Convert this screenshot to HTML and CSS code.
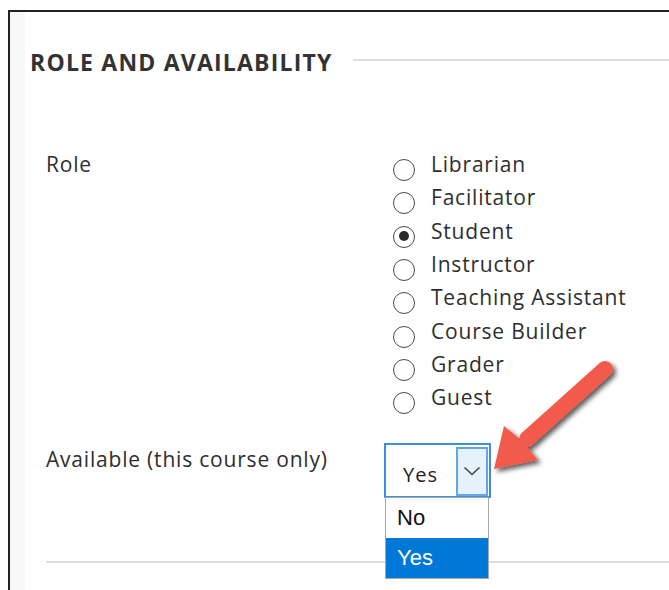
FILE: index.html
```html
<!DOCTYPE html>
<html lang="en">
<head>
<meta charset="utf-8">
<title>Role and Availability</title>
<link rel="stylesheet" href="styles.css">
</head>
<body>
<div class="frame">
  <div class="gutter"></div>
  <div class="content">
    <div class="section-head">
      <h2 class="section-title">ROLE AND AVAILABILITY</h2>
      <div class="rule"></div>
    </div>

    <div class="form">
      <div class="field">
        <div class="label">Role</div>
        <div class="radios">
          <label class="radio"><span class="dot"></span><span>Librarian</span></label>
          <label class="radio"><span class="dot"></span><span>Facilitator</span></label>
          <label class="radio"><span class="dot checked"></span><span>Student</span></label>
          <label class="radio"><span class="dot"></span><span>Instructor</span></label>
          <label class="radio"><span class="dot"></span><span>Teaching Assistant</span></label>
          <label class="radio"><span class="dot"></span><span>Course Builder</span></label>
          <label class="radio"><span class="dot"></span><span>Grader</span></label>
          <label class="radio"><span class="dot"></span><span>Guest</span></label>
        </div>
      </div>

      <div class="field field-avail">
        <div class="label">Available (this course only)</div>
        <div class="select-wrap">
          <div class="select">
            <span class="select-value">Yes</span>
            <span class="select-btn">
              <svg width="18" height="10" viewBox="0 0 18 10"><path d="M1.5 1.5 L9 8.5 L16.5 1.5" fill="none" stroke="#444" stroke-width="1.6"/></svg>
            </span>
          </div>
          <ul class="options">
            <li class="option">No</li>
            <li class="option active">Yes</li>
          </ul>
        </div>
      </div>

      <div class="divider"></div>
    </div>
  </div>
</div>

<svg class="callout" width="669" height="590" viewBox="0 0 669 590">
  <defs>
    <filter id="arrowShadow" x="-20%" y="-20%" width="140%" height="140%">
      <feDropShadow dx="3" dy="3" stdDeviation="2.5" flood-color="#000" flood-opacity="0.65"/>
    </filter>
  </defs>
  <g filter="url(#arrowShadow)" fill="#f25a4b">
    <line x1="605" y1="369" x2="527" y2="439" stroke="#f25a4b" stroke-width="16" stroke-linecap="round"/>
    <polygon points="494,469 504,426 521,440 538,460"/>
  </g>
</svg>
</body>
</html>
```

FILE: styles.css
```css
html, body {
  margin: 0;
  padding: 0;
  background: #fff;
}

body {
  font-family: "Open Sans", "Noto Sans", sans-serif;
  color: #2e2e2e;
  overflow: hidden;
  width: 669px;
  height: 590px;
  position: relative;
}

.frame {
  margin: 10px 0 0 8px;
  border-top: 2px solid #222;
  border-left: 2px solid #222;
  height: 600px;
  display: flex;
}

.gutter {
  width: 15px;
  flex: none;
  background: #f8f8f8;
}

.content {
  flex: 1;
}

.section-head {
  display: flex;
  align-items: flex-start;
  padding: 35px 0 0 5px;
}

.section-title {
  margin: 0;
  font-size: 23px;
  line-height: 30px;
  font-weight: 700;
  letter-spacing: 1.2px;
  color: #333;
  white-space: nowrap;
}

.rule {
  flex: 1;
  height: 2px;
  background: #ddd;
  margin: 12px 0 0 20px;
}

.form {
  padding-left: 21px;
  margin-top: 71px;
}

.field {
  display: grid;
  grid-template-columns: 338px auto;
  align-items: start;
}

.label,
.radio {
  font-size: 21px;
  line-height: 33.33px;
  letter-spacing: 0.8px;
  white-space: nowrap;
}

.radios {
  padding-left: 9px;
}

.radio {
  display: flex;
  align-items: flex-start;
}

.dot {
  width: 22px;
  height: 22px;
  box-sizing: border-box;
  border: 1.6px solid #4a4a4a;
  border-radius: 50%;
  margin: 11px 16px 0 0;
  flex: none;
  position: relative;
}

.dot.checked::after {
  content: "";
  position: absolute;
  left: 4.5px;
  top: 4.5px;
  width: 10px;
  height: 10px;
  border-radius: 50%;
  background: #2a2a2a;
}

.field-avail {
  margin-top: 28px;
}

.select-wrap {
  position: relative;
  width: 107px;
}

.select {
  display: flex;
  width: 107px;
  height: 55px;
  box-sizing: border-box;
  border: 2px solid #3b8ee2;
  background: #fff;
}

.select-value {
  flex: 1;
  padding: 17px 0 0 17px;
  font-size: 20px;
  line-height: 26px;
  letter-spacing: 1px;
  color: #222;
}

.select-btn {
  width: 32px;
  margin: 2px 1px 0 0;
  box-sizing: border-box;
  border: 2px solid #62a6ea;
  background: #e5f1fb;
  display: flex;
  align-items: center;
  justify-content: center;
}

.options {
  position: absolute;
  left: 1px;
  top: 54px;
  width: 104px;
  margin: 0;
  padding: 0;
  list-style: none;
  box-sizing: border-box;
  border: 1.5px solid #a8a8a8;
  background: #fff;
  z-index: 2;
  font-family: "Liberation Sans", Arial, sans-serif;
  font-size: 22px;
}

.option {
  height: 40px;
  line-height: 40px;
  padding-left: 11px;
  color: #111;
}

.option.active {
  background: #0078d7;
  color: #fff;
}

.divider {
  height: 2px;
  background: #ddd;
  margin-top: 63px;
}

.callout {
  position: absolute;
  left: 0;
  top: 0;
  pointer-events: none;
  z-index: 5;
}
```
